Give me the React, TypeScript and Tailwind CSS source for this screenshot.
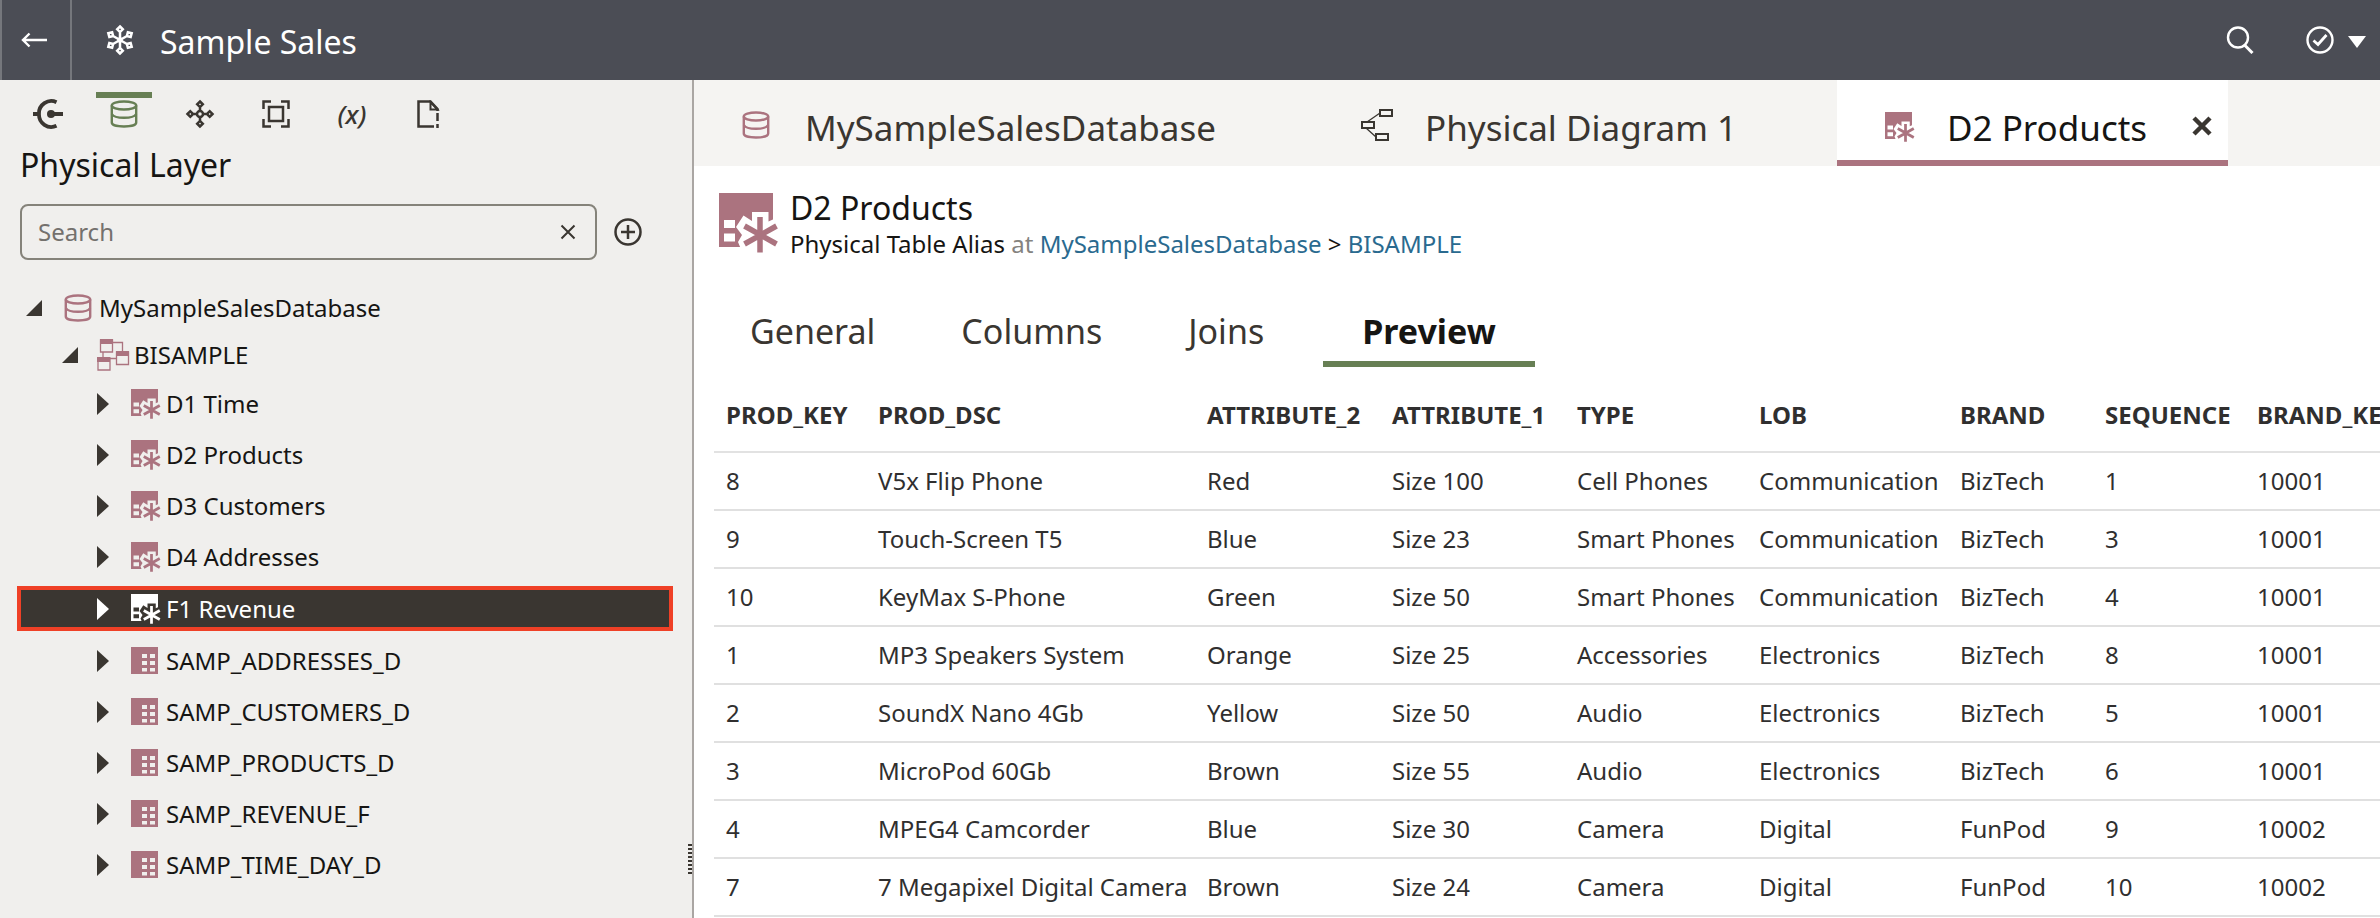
import type { ReactNode } from "react";

const DARK = "#3a3631";

function DatabaseIcon({ className }: { className: string }) {
  return (
    <svg className={className} viewBox="0 0 28 28" fill="none" stroke="currentColor" strokeWidth="2.400">
      <ellipse cx="14" cy="5.500" rx="12.200" ry="4" />
      <path d="M1.800 5.500V22.500c0 2.400 5 4 12.200 4s12.200-1.600 12.200-4V5.500" />
      <path d="M1.800 14c1.500 2.600 6 3.800 12.200 3.800S24.700 16.600 26.200 14" />
    </svg>
  );
}

function AliasIcon({ className, gap }: { className: string; gap: string }) {
  return (
    <svg className={className} viewBox="0 0 60 60">
      <path d="M0 0H54V54H0Z" fill="currentColor" />
      <path d="M5 27h11v8H5zM5 40.500h11v8H5z" fill={gap} />
      <path d="M33 19h16.500v9.500L55 26v29H21.500l-2.500-6 4-7-6-8 7.500-11.500L33 28z" fill={gap} />
      <path d="M41 24v35.500M25.500 33l32 18M57.500 33l-32 18" stroke="currentColor" strokeWidth="5.500" fill="none" />
    </svg>
  );
}

function TableIcon({ className }: { className: string }) {
  return (
    <svg className={className} viewBox="0 0 27 27">
      <path d="M0 0H27V27H0Z" fill="currentColor" />
      <path
        d="M11 7h5v4h-5zM19 7h5v4h-5zM11 14h5v4h-5zM19 14h5v4h-5zM11 21h5v3.500h-5zM19 21h5v3.500h-5z"
        fill="#f0efed"
      />
    </svg>
  );
}

function SchemaIcon({ className }: { className: string }) {
  return (
    <svg className={className} viewBox="0 0 34 34" fill="none" stroke="currentColor">
      <path d="M17 4.500H26.500V13M7 14v5M14 20.500h6" strokeWidth="1.300" />
      <path d="M4.500 2h12v12h-12zM20.500 14h12v12.500h-12zM2 20h12v12H2z" strokeWidth="1.300" />
      <path d="M4 1h13v5H4zM20 13h13v5H20zM1 19h13v5H1z" fill="currentColor" stroke="none" />
    </svg>
  );
}

function SnowflakeIcon() {
  return (
    <svg className="size-8" viewBox="0 0 32 32" fill="none" stroke="currentColor" strokeWidth="2.500">
      {[0, 60, 120, 180, 240, 300].map((angle) => (
        <g key={angle} transform={`rotate(${angle} 16 16)`}>
          <path d="M16 16V8M16 2.500l2.800 2.800L16 8.100l-2.800-2.800z" />
        </g>
      ))}
      <circle cx="16" cy="16" r="1.500" />
    </svg>
  );
}

function NetworkIcon() {
  return (
    <svg className="size-[30px]" viewBox="0 0 30 30" fill="none" stroke="currentColor" strokeWidth="2.500">
      {[0, 90, 180, 270].map((angle) => (
        <g key={angle} transform={`rotate(${angle} 15 15)`}>
          <path d="M15 12V8M15 2.500l2.800 2.800L15 8.100l-2.800-2.800z" />
        </g>
      ))}
      <circle cx="15" cy="15" r="3" />
    </svg>
  );
}

function ConnectionIcon() {
  return (
    <svg className="size-[30px]" viewBox="0 0 30 30" fill="none" stroke="currentColor" strokeWidth="3.800">
      <path d="M23.500 3.200A12.300 12.300 0 0 0 6 15A12.300 12.300 0 0 0 23.500 26.800" />
      <path d="M0 15h6M18 15h12" />
      <circle cx="18" cy="15" r="4" fill="currentColor" stroke="none" />
    </svg>
  );
}

function FrameIcon() {
  return (
    <svg className="size-[28px]" viewBox="0 0 28 28" fill="none" stroke="currentColor" strokeWidth="2.500">
      <path d="M1.500 9V1.500H9M19 1.500h7.500V9M26.500 19v7.500H19M9 26.500H1.500V19" />
      <path d="M7 7h14v14H7z" />
    </svg>
  );
}

function PageAlertIcon() {
  return (
    <svg className="h-7 w-[24px]" viewBox="0 0 24 28" fill="none" stroke="currentColor" strokeWidth="2.500">
      <path d="M18 26.500H2.500V1.500H14.500L21.500 9v2M21.500 13v8M21.500 24v4" />
      <path d="M14.500 2v7.500h7z" strokeWidth="2" />
    </svg>
  );
}

function DiagramIcon() {
  return (
    <svg className="h-9 w-8" viewBox="0 0 32 36" fill="none" stroke="currentColor" strokeWidth="2">
      <path d="M19 3h12v6H19zM1 15h12v6H1zM15 27h12v6H15z" />
      <path d="M6 15L19 6M5 21l10 9" strokeWidth="1.300" />
    </svg>
  );
}

function Arrow({ open }: { open: boolean }) {
  return (
    <svg className="size-6 shrink-0" viewBox="0 0 24 24" fill="currentColor">
      <path d={open ? "M4 20H20V4Z" : "M7 1V23L19 12Z"} />
    </svg>
  );
}

type Kind = "alias" | "table";

const leaves: { name: string; kind: Kind; selected?: boolean }[] = [
  { name: "D1 Time", kind: "alias" },
  { name: "D2 Products", kind: "alias" },
  { name: "D3 Customers", kind: "alias" },
  { name: "D4 Addresses", kind: "alias" },
  { name: "F1 Revenue", kind: "alias", selected: true },
  { name: "SAMP_ADDRESSES_D", kind: "table" },
  { name: "SAMP_CUSTOMERS_D", kind: "table" },
  { name: "SAMP_PRODUCTS_D", kind: "table" },
  { name: "SAMP_REVENUE_F", kind: "table" },
  { name: "SAMP_TIME_DAY_D", kind: "table" },
];

const columns = [
  { name: "PROD_KEY", width: "w-[152px]" },
  { name: "PROD_DSC", width: "w-[329px]" },
  { name: "ATTRIBUTE_2", width: "w-[185px]" },
  { name: "ATTRIBUTE_1", width: "w-[185px]" },
  { name: "TYPE", width: "w-[182px]" },
  { name: "LOB", width: "w-[201px]" },
  { name: "BRAND", width: "w-[145px]" },
  { name: "SEQUENCE", width: "w-[152px]" },
  { name: "BRAND_KEY", width: "w-[180px]" },
];

const rows = [
  ["8", "V5x Flip Phone", "Red", "Size 100", "Cell Phones", "Communication", "BizTech", "1", "10001"],
  ["9", "Touch-Screen T5", "Blue", "Size 23", "Smart Phones", "Communication", "BizTech", "3", "10001"],
  ["10", "KeyMax S-Phone", "Green", "Size 50", "Smart Phones", "Communication", "BizTech", "4", "10001"],
  ["1", "MP3 Speakers System", "Orange", "Size 25", "Accessories", "Electronics", "BizTech", "8", "10001"],
  ["2", "SoundX Nano 4Gb", "Yellow", "Size 50", "Audio", "Electronics", "BizTech", "5", "10001"],
  ["3", "MicroPod 60Gb", "Brown", "Size 55", "Audio", "Electronics", "BizTech", "6", "10001"],
  ["4", "MPEG4 Camcorder", "Blue", "Size 30", "Camera", "Digital", "FunPod", "9", "10002"],
  ["7", "7 Megapixel Digital Camera", "Brown", "Size 24", "Camera", "Digital", "FunPod", "10", "10002"],
];

function LayerButton({ label, active, children }: { label: string; active?: boolean; children: ReactNode }) {
  return (
    <button
      type="button"
      aria-label={label}
      className={`flex h-[38px] w-14 items-center justify-center border-t-[6px] ${
        active ? "border-[#677f54] text-[#677f54]" : "border-transparent text-[#3a3631]"
      }`}
    >
      {children}
    </button>
  );
}

function Header() {
  return (
    <header className="flex h-20 shrink-0 items-center border-l-2 border-[#75777c] bg-[#4b4d55] text-white">
      <button
        type="button"
        aria-label="Back"
        className="flex h-full w-[70px] items-center justify-center border-r-2 border-[#75777c] pr-1"
      >
        <svg className="h-4 w-[26px]" viewBox="0 0 26 16" fill="none" stroke="currentColor" strokeWidth="2.400">
          <path d="M26 8H2M8.500 1.500L2 8l6.500 6.500" />
        </svg>
      </button>
      <div className="flex items-center gap-6 pl-8">
        <SnowflakeIcon />
        <h1 className="pt-1 text-[32px] leading-10">Sample Sales</h1>
      </div>
      <div className="ml-auto flex items-center pr-[14px]">
        <button type="button" aria-label="Search" className="mr-[52px]">
          <svg className="size-7" viewBox="0 0 28 28" fill="none" stroke="currentColor" strokeWidth="2.400">
            <circle cx="12" cy="11.500" r="10" />
            <path d="M18.500 19l8 8" strokeWidth="3" />
          </svg>
        </button>
        <button type="button" aria-label="Validate" className="flex items-center gap-[14px]">
          <svg className="size-7" viewBox="0 0 28 28" fill="none" stroke="currentColor" strokeWidth="2.400">
            <circle cx="14" cy="14" r="12.500" />
            <path d="M7.500 14.500l4.500 4 8.500-9.500" strokeWidth="2.800" />
          </svg>
          <svg className="mt-1 h-3 w-[18px]" viewBox="0 0 18 12" fill="currentColor">
            <path d="M0 0H18L9 12Z" />
          </svg>
        </button>
      </div>
    </header>
  );
}

function Sidebar() {
  return (
    <aside className="relative w-[694px] shrink-0 border-r-2 border-[#aaa6a3] bg-[#f0efed]">
      <nav aria-label="Layers" className="flex gap-5 pt-3 pl-5">
        <LayerButton label="Connections">
          <ConnectionIcon />
        </LayerButton>
        <LayerButton label="Physical Layer" active>
          <DatabaseIcon className="size-7" />
        </LayerButton>
        <LayerButton label="Logical Layer">
          <NetworkIcon />
        </LayerButton>
        <LayerButton label="Presentation Layer">
          <FrameIcon />
        </LayerButton>
        <LayerButton label="Variables">
          <span className="text-[26px] leading-7 font-medium italic">(x)</span>
        </LayerButton>
        <LayerButton label="Consistency">
          <PageAlertIcon />
        </LayerButton>
      </nav>
      <h2 className="mt-[14px] pl-5 text-[32px] leading-[42px] text-[#161513]">Physical Layer</h2>
      <div className="mt-[18px] flex items-center gap-[17px] pl-5">
        <label className="flex h-14 w-[577px] items-center rounded-lg border-2 border-[#85837a] px-4">
          <input
            type="text"
            aria-label="Search"
            placeholder="Search"
            className="min-w-0 flex-1 bg-transparent text-[24px] outline-none placeholder:text-[#74716d]"
          />
          <button type="button" aria-label="Clear">
            <svg className="size-6" viewBox="0 0 24 24" stroke={DARK} strokeWidth="2">
              <path d="M6.500 5.500l13 13M19.500 5.500l-13 13" />
            </svg>
          </button>
        </label>
        <button type="button" aria-label="Add">
          <svg className="size-7" viewBox="0 0 28 28" fill="none" stroke={DARK} strokeWidth="2.500">
            <circle cx="14" cy="14" r="12.500" />
            <path d="M14 7v14M7 14h14" />
          </svg>
        </button>
      </div>
      <ul role="tree" aria-label="Physical Layer" className="mt-6 pr-[19px] pl-[17px] text-[24px] text-[#161513]">
        <li role="treeitem" aria-expanded className="flex h-12 items-center pl-[5px]">
          <span className="text-[#3a3631]"><Arrow open /></span>
          <span className="mr-[7px] ml-[18px] text-[#ab737f]"><DatabaseIcon className="size-7" /></span>
          MySampleSalesDatabase
        </li>
        <li role="treeitem" aria-expanded className="flex h-[46px] items-center pl-[41px]">
          <span className="text-[#3a3631]"><Arrow open /></span>
          <span className="mr-1 ml-[14px] text-[#ab737f]"><SchemaIcon className="size-[34px]" /></span>
          BISAMPLE
        </li>
        {leaves.map((leaf) => (
          <li
            key={leaf.name}
            role="treeitem"
            aria-selected={!!leaf.selected}
            className={`flex items-center ${
              leaf.selected
                ? "my-1 h-[45px] border-4 border-[#ef4026] bg-[#3a3631] pl-[69px] text-white"
                : "h-[51px] pl-[73px]"
            }`}
          >
            <span className={leaf.selected ? "text-white" : "text-[#3a3631]"}><Arrow open={false} /></span>
            <span className={`mr-[5px] ml-[17px] ${leaf.selected ? "text-white" : "text-[#ab737f]"}`}>
              {leaf.kind === "alias" ? (
                <AliasIcon className="size-[30px]" gap={leaf.selected ? DARK : "#f0efed"} />
              ) : (
                <TableIcon className="mr-[3px] size-[27px]" />
              )}
            </span>
            {leaf.name}
          </li>
        ))}
      </ul>
      <div className="absolute right-0 bottom-[44px] flex w-1 flex-col gap-[2px]">
        {Array.from({ length: 8 }, (_, i) => (
          <span key={i} className="h-[2px] bg-[#3a3631]" />
        ))}
      </div>
    </aside>
  );
}

function EditorTabs() {
  return (
    <div
      role="tablist"
      aria-label="Open editors"
      className="flex h-[86px] items-stretch bg-[#f5f4f2] text-[35px] whitespace-nowrap text-[#3a3631]"
    >
      <button role="tab" type="button" className="flex items-center gap-[35px] pt-1 pr-[145px] pl-[48px]">
        <DatabaseIcon className="size-7 text-[#ab737f]" />
        <span className="pt-[6px]">MySampleSalesDatabase</span>
      </button>
      <button role="tab" type="button" className="flex items-center gap-8 pt-1 pr-[100px]">
        <DiagramIcon />
        <span className="pt-[6px]">Physical Diagram 1</span>
      </button>
      <div className="flex items-center border-b-[6px] border-[#ab737f] bg-white pr-4 pl-12 text-[#161513]">
        <button role="tab" type="button" aria-selected className="flex items-center gap-8 pt-[14px]">
          <span className="text-[#ab737f]"><AliasIcon className="size-[30px]" gap="#ffffff" /></span>
          <span className="pt-[2px]">D2 Products</span>
        </button>
        <button type="button" aria-label="Close tab" className="ml-[45px] pt-3 text-[#3a3631]">
          <svg className="size-5" viewBox="0 0 20 20" stroke="currentColor" strokeWidth="4.500">
            <path d="M2 2l16 16M18 2L2 18" />
          </svg>
        </button>
      </div>
    </div>
  );
}

function Details() {
  return (
    <>
      <div className="flex gap-[11px] pt-[22px] pl-[25px]">
        <span className="pt-[5px] text-[#ab737f]">
          <AliasIcon className="size-[60px]" gap="#ffffff" />
        </span>
        <div>
          <h2 className="text-[32px] leading-10 text-[#161513]">D2 Products</h2>
          <p className="text-[24px] leading-8 text-[#161513]">
            Physical Table Alias <span className="text-[#85837f]">at</span>{" "}
            <a href="#database" className="text-[#2a6a8f]">MySampleSalesDatabase</a> &gt;{" "}
            <a href="#schema" className="text-[#2a6a8f]">BISAMPLE</a>
          </p>
        </div>
      </div>
      <div
        role="tablist"
        aria-label="Table details"
        className="mt-[38px] flex h-[69px] pl-[13px] text-[34px] text-[#3a3631]"
      >
        {["General", "Columns", "Joins"].map((name) => (
          <button key={name} role="tab" type="button" className="border-b-[6px] border-transparent px-[43px] pt-1">
            {name}
          </button>
        ))}
        <button
          role="tab"
          type="button"
          aria-selected
          className="ml-4 border-b-[6px] border-[#677f54] px-[39px] pt-1 font-bold text-[#161513]"
        >
          Preview
        </button>
      </div>
      <div className="overflow-hidden pl-5">
        <table className="w-[1711px] table-fixed text-left text-[24px] whitespace-nowrap text-[#302f2f]">
          <thead>
            <tr className="h-[85px] border-b-2 border-[#e2e2e2]">
              {columns.map((column) => (
                <th key={column.name} className={`pt-3 pl-3 font-bold ${column.width}`}>{column.name}</th>
              ))}
            </tr>
          </thead>
          <tbody>
            {rows.map((row) => (
              <tr key={row[0]} className="h-[58px] border-b-2 border-[#e0e0e0]">
                {row.map((value, i) => (
                  <td key={columns[i].name} className="pl-3">{value}</td>
                ))}
              </tr>
            ))}
          </tbody>
        </table>
      </div>
    </>
  );
}

export default function App() {
  return (
    <div className="flex min-h-screen flex-col overflow-hidden bg-white font-['Noto_Sans',sans-serif]">
      <Header />
      <div className="flex flex-1">
        <Sidebar />
        <main className="min-w-0 flex-1">
          <EditorTabs />
          <Details />
        </main>
      </div>
    </div>
  );
}
